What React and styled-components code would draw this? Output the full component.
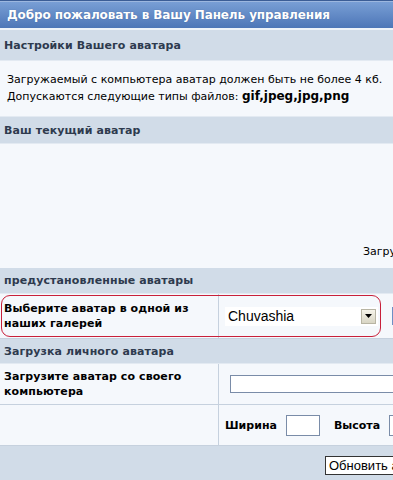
import React from 'react'
import styled, { createGlobalStyle } from 'styled-components'

const Global = createGlobalStyle`
  html, body {
    margin: 0;
    padding: 0;
    background: #f5f8fc;
    overflow: hidden;
  }
  body {
    font-family: 'DejaVu Sans', Verdana, sans-serif;
    font-size: 11px;
    color: #000;
  }
`

const Viewport = styled.div`
  width: 393px;
  height: 480px;
  overflow: hidden;
`

const Panel = styled.div`
  width: 620px;
  background: #f5f8fc;
`

const TitleBar = styled.div`
  height: 27px;
  border-top: 1px solid #3b5d96;
  box-shadow: inset 0 1px 0 #9cb7df;
  background: linear-gradient(#7aa0d6, #4d76b7);
  border-bottom: 2px solid #eef3f9;
  color: #fff;
  font-weight: bold;
  font-size: 12px;
  display: flex;
  align-items: center;
  padding-left: 7px;
  letter-spacing: -0.1px;
  text-shadow: 0 0 1px rgba(30, 50, 90, 0.4);
`

const SectionHead = styled.div`
  height: ${p => p.h || 26}px;
  background: #d1dce8;
  color: #2e3a4e;
  font-weight: bold;
  display: flex;
  align-items: center;
  padding-left: 4px;
  border-bottom: 1px solid #e3eaf2;
  letter-spacing: 0.1px;
`

const Info = styled.div`
  padding: 10px 7px 11px;
  line-height: 17px;
  border-bottom: 1px solid #e3eaf2;
  b {
    font-size: 12px;
  }
`

const AvatarArea = styled.div`
  height: 124px;
  display: flex;
  align-items: flex-end;
  padding-left: 363px;
  padding-bottom: 10px;
  box-sizing: border-box;
  white-space: nowrap;
`

const Row = styled.div`
  display: grid;
  grid-template-columns: 219px 1fr;
  height: ${p => p.h}px;
  border-bottom: 1px solid #c6d1de;
  position: relative;
`

const Highlight = styled.div`
  position: absolute;
  left: 1px;
  top: 1px;
  width: 378px;
  bottom: 1px;
  border: 1px solid #c8203a;
  border-radius: 9px;
  pointer-events: none;
`

const LabelCell = styled.div`
  border-right: 1px solid #c6d1de;
  font-weight: bold;
  padding: 0 4px;
  display: flex;
  align-items: center;
  line-height: 15px;
  letter-spacing: 0.1px;
`

const FieldCell = styled.div`
  display: flex;
  align-items: center;
  padding-left: ${p => p.pl || 7}px;
`

const Select = styled.div`
  width: 153px;
  height: 19px;
  background: #fff;
  display: flex;
  align-items: center;
  justify-content: space-between;
  font-family: 'Liberation Sans', Arial, sans-serif;
  font-size: 14px;
  padding-left: 3px;
  box-sizing: border-box;
  margin-left: -1px;
`

const ArrowBtn = styled.div`
  width: 15px;
  height: 15px;
  margin-right: 2px;
  background: linear-gradient(#f6f4ea, #d8d5c4);
  border: 1px solid #b8b5a4;
  box-sizing: border-box;
  display: flex;
  align-items: center;
  justify-content: center;
`

const BlueEdge = styled.div`
  width: 8px;
  height: 18px;
  background: #6e8fc4;
  margin-left: 14px;
`

const TextInput = styled.div`
  width: ${p => p.w}px;
  height: ${p => p.h || 18}px;
  background: #fff;
  border: 1px solid #7a8ca8;
  box-sizing: border-box;
`

const SizeLabel = styled.span`
  font-weight: bold;
  font-size: 11px;
`

const SizeGroup = styled.div`
  display: flex;
  align-items: center;
  gap: 9px;
  margin-right: 14px;
`

const Footer = styled.div`
  height: 37px;
  background: #d1dce8;
  display: flex;
  align-items: center;
  padding-left: 325px;
`

const Button = styled.div`
  height: 17px;
  padding: 0 3px;
  background: #fff;
  border: 1px solid #333;
  font-family: 'Liberation Sans', Arial, sans-serif;
  font-size: 13px;
  display: flex;
  align-items: center;
  white-space: nowrap;
  margin-top: 2px;
`

export default function App() {
  return (
    <Viewport>
      <Global />
      <Panel>
        <TitleBar>Добро пожаловать в Вашу Панель управления</TitleBar>
        <SectionHead h={30}>Настройки Вашего аватара</SectionHead>
        <Info>
          Загружаемый с компьютера аватар должен быть не более 4 кб.
          <br />
          Допускаются следующие типы файлов: <b>gif,jpeg,jpg,png</b>
        </Info>
        <SectionHead h={26}>Ваш текущий аватар</SectionHead>
        <AvatarArea>Загрузить новый аватар</AvatarArea>
        <SectionHead h={25}>предустановленные аватары</SectionHead>
        <Row h={44}>
          <LabelCell>Выберите аватар в одной из наших галерей</LabelCell>
          <FieldCell>
            <Select>
              Chuvashia
              <ArrowBtn>
                <svg width="7" height="4" viewBox="0 0 7 4">
                  <path d="M0 0h7L3.5 4z" fill="#000" />
                </svg>
              </ArrowBtn>
            </Select>
            <BlueEdge />
          </FieldCell>
          <Highlight />
        </Row>
        <SectionHead h={24}>Загрузка личного аватара</SectionHead>
        <Row h={40}>
          <LabelCell>Загрузите аватар со своего компьютера</LabelCell>
          <FieldCell pl={11}>
            <TextInput w={300} />
          </FieldCell>
        </Row>
        <Row h={40}>
          <LabelCell />
          <FieldCell pl={6}>
            <SizeGroup>
              <SizeLabel>Ширина</SizeLabel>
              <TextInput w={34} h={21} />
            </SizeGroup>
            <SizeGroup>
              <SizeLabel>Высота</SizeLabel>
              <TextInput w={34} h={21} />
            </SizeGroup>
          </FieldCell>
        </Row>
        <Footer>
          <Button>Обновить аватар</Button>
        </Footer>
      </Panel>
    </Viewport>
  )
}
